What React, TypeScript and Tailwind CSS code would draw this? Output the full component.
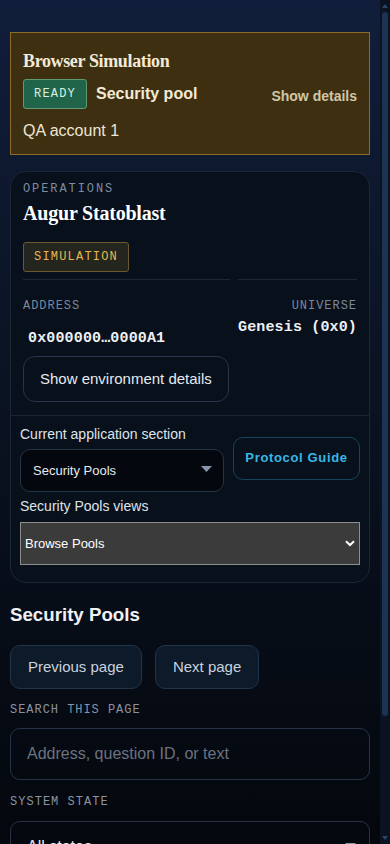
import React from "react";

const mono = "font-['Liberation_Mono',monospace]";
const serif = "font-['Liberation_Serif',serif]";

function ScrollTrack() {
  return (
    <div aria-hidden className="fixed right-0 top-0 flex h-screen w-[10px] flex-col items-center bg-[#0b1322]">
      <svg className="mt-[4px]" width="6" height="4" viewBox="0 0 6 4">
        <path d="M0 4L3 0L6 4Z" fill="#2b4564" />
      </svg>
      <div className="mt-[4px] h-[704px] w-[6px] rounded-full bg-[#1c3352]" />
      <div className="flex-1" />
      <svg className="mb-[4px]" width="6" height="4" viewBox="0 0 6 4">
        <path d="M0 0L6 0L3 4Z" fill="#2b4564" />
      </svg>
    </div>
  );
}

export default function App() {
  return (
    <div className="min-h-screen bg-[linear-gradient(180deg,#111e3b_0%,#0a1322_45%,#04070d_100%)] bg-fixed font-['Liberation_Sans',Arial,sans-serif] text-[#e8ebf0]">
      <div className="pl-[10px] pr-[20px] pt-8 pb-10">
        {/* Banner */}
        <section className="border border-[#8b6c2a] bg-[#3e2f11] px-3 pt-4 pb-[11px]">
          <h1 className={`${serif} text-[18px] font-bold leading-6 tracking-[-0.02em] text-[#f3ead6]`}>
            Browser Simulation
          </h1>
          <div className="mt-[6px] flex items-center justify-between">
            <div className="flex items-center gap-[9px]">
              <span className={`${mono} flex h-[30px] items-center rounded-[3px] border border-[#5f9a70] bg-[#206549] px-[10px] text-[12px] tracking-[0.1em] text-[#d9efe2]`}>
                READY
              </span>
              <span className="text-[16px] font-bold text-[#f3ead6]">Security pool</span>
            </div>
            <span className="mt-1 text-[14px] font-bold text-[#d2c6a6]">Show details</span>
          </div>
          <div className="mt-[10px] text-[16px] leading-6 text-[#eee6d4]">QA account 1</div>
        </section>

        {/* Operations card */}
        <section className="mt-4 rounded-2xl border border-[#1b2637] bg-[#08101b]">
          <div className="px-3 pt-[9px] pb-[13px]">
            <div className={`${mono} text-[12px] leading-4 tracking-[0.16em] text-[#7f8ba0]`}>OPERATIONS</div>
            <h2 className={`${serif} mt-[2px] text-[20px] font-bold leading-7 tracking-[-0.01em] text-white`}>
              Augur Statoblast
            </h2>
            <div className="mt-[15px] flex">
              <span className={`${mono} flex h-[30px] items-center rounded-[3px] border border-[#6b5a2f] bg-[#25251f] px-[10px] text-[12px] tracking-[0.1em] text-[#e6b650]`}>
                SIMULATION
              </span>
            </div>
            <div className="mt-[7px] grid grid-cols-[1fr_auto] gap-x-2">
              <div className="border-t border-[#1c2737] pt-[18px]">
                <div className={`${mono} text-[12px] leading-4 tracking-[0.08em] text-[#7a879c]`}>ADDRESS</div>
                <div className={`${mono} mt-[15px] px-[5px] text-[15px] font-bold leading-5 tracking-[0.01em] text-[#eef1f5]`}>
                  0x000000…0000A1
                </div>
                <button className="mt-[7px] h-[46px] rounded-xl border border-[#26354a] px-4 text-[15px] text-[#e6eaf0]">
                  Show environment details
                </button>
              </div>
              <div className="border-t border-[#1c2737] pt-[18px] text-right">
                <div className={`${mono} text-[12px] leading-4 tracking-[0.08em] text-[#7a879c]`}>UNIVERSE</div>
                <div className={`${mono} mt-[4px] text-[15px] font-bold leading-5 tracking-[0.01em] text-[#eef1f5]`}>Genesis (0x0)</div>
              </div>
            </div>
          </div>
          <div className="border-t border-[#1a2433] px-[9px] pt-2 pb-[17px]">
            <div className="flex items-center gap-[9px]">
              <div className="flex-1">
                <div className="text-[14px] leading-5 text-[#dfe4ea]">Current application section</div>
                <div className="relative mt-[5px]">
                  <select className="h-[43px] w-full appearance-none rounded-[10px] border border-[#243345] bg-[#04070d] pl-3 text-[13px] text-[#e6eaf0] outline-none">
                    <option>Security Pools</option>
                  </select>
                  <svg className="pointer-events-none absolute right-[12px] top-[17px]" width="11" height="7" viewBox="0 0 11 7">
                    <path d="M0 0H11L5.5 6Z" fill="#8795aa" />
                  </svg>
                </div>
              </div>
              <button className="h-[43px] w-[127px] rounded-[10px] border border-[#17445a] text-[13px] font-bold tracking-[0.05em] text-[#38b8e6]">
                Protocol Guide
              </button>
            </div>
            <div className="mt-1 text-[14px] leading-5 text-[#dfe4ea]">Security Pools views</div>
            <div className="relative mt-[6px]">
              <select className="h-[43px] w-full appearance-none border border-[#8e8e8e] bg-[#3b3b3b] pl-1 text-[13px] text-white outline-none">
                <option>Browse Pools</option>
              </select>
              <svg className="pointer-events-none absolute right-[5px] top-[18px]" width="10" height="7" viewBox="0 0 10 7">
                <path d="M1 1.2L5 5L9 1.2" fill="none" stroke="#ffffff" strokeWidth="2" />
              </svg>
            </div>
          </div>
        </section>

        {/* Security Pools */}
        <h2 className="mt-5 text-[18.7px] font-bold leading-6 text-[#eef1f5]">Security Pools</h2>
        <div className="mt-[18px] flex gap-[13px]">
          <button className="h-[44px] rounded-[10px] border border-[#22344a] bg-[#0c1a2a] px-[17px] text-[15px] text-[#c9d2de]">
            Previous page
          </button>
          <button className="h-[44px] rounded-[10px] border border-[#22344a] bg-[#0c1a2a] px-[17px] text-[15px] text-[#c9d2de]">
            Next page
          </button>
        </div>
        <div className={`${mono} mt-[13px] text-[12px] leading-4 tracking-[0.08em] text-[#8a93a3]`}>SEARCH THIS PAGE</div>
        <input
          className="mt-[10px] h-[52px] w-full rounded-[10px] border border-[#273246] bg-transparent px-4 text-[16px] text-[#e6eaf0] outline-none placeholder:text-[#6b7280]"
          placeholder="Address, question ID, or text"
        />
        <div className={`${mono} mt-[14px] text-[12px] leading-4 tracking-[0.085em] text-[#8a93a3]`}>SYSTEM STATE</div>
        <div className="relative mt-[11px]">
          <select className="h-[52px] w-full appearance-none rounded-[10px] border border-[#273246] bg-transparent px-4 text-[16px] text-[#e6eaf0] outline-none">
            <option>All states</option>
          </select>
          <svg className="pointer-events-none absolute right-[14px] top-[22px]" width="11" height="7" viewBox="0 0 11 7">
            <path d="M0 0H11L5.5 6Z" fill="#8795aa" />
          </svg>
        </div>
        <div className="mt-4 rounded-xl border border-[#1b2637] px-4 py-6 text-[14px] text-[#8a93a3]">
          No security pools match this page.
        </div>
      </div>
      <ScrollTrack />
    </div>
  );
}
